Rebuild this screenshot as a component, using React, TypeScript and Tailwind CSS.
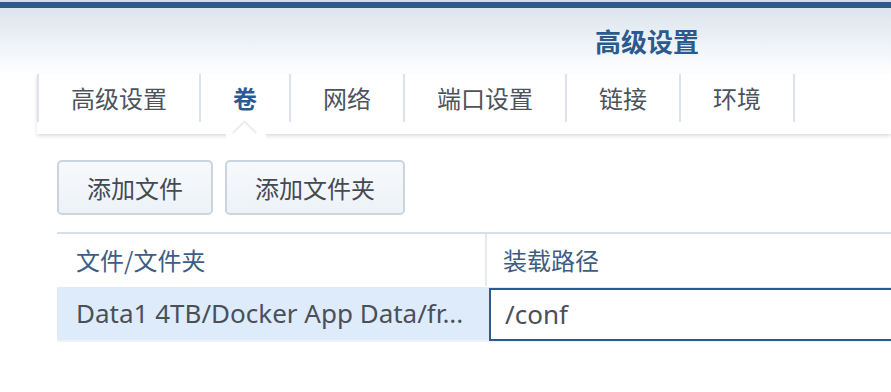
import React from "react";

const tabs = ["高级设置", "卷", "网络", "端口设置", "链接", "环境"];

export default function App() {
  return (
    <div className="w-[891px] h-[392px] bg-white overflow-hidden relative font-['Noto_Sans','Noto_Sans_CJK_SC',sans-serif]">
      <div className="h-[2px] bg-[#d6dce4]" />
      <div className="h-[6px] bg-[#2c5a8e]" />
      <div className="h-[66px] bg-gradient-to-b from-[#dce4ee] to-white flex items-center pl-[595px]">
        <span className="text-[26px] font-bold text-[#2c5a8e] leading-none font-['Noto_Sans_CJK_SC',sans-serif]">高级设置</span>
      </div>
      <div className="ml-[37px] h-[60px] bg-white relative z-10 shadow-[0_2px_4px_rgba(0,0,0,0.14)]">
        <div className="flex h-[48px]">
          {tabs.map((t, i) => (
            <div
              key={t}
              className={
                "flex items-center px-[32px] border-l-2 border-[#dbe3ec] text-[24px] leading-none font-['Noto_Sans_CJK_SC',sans-serif] " +
                (i === tabs.length - 1 ? "border-r-2 " : "") +
                (i === 1 ? "font-bold text-[#2c5a8e]" : "text-[#4d535c]")
              }
            >
              {t}
            </div>
          ))}
        </div>
        <div className="absolute left-[199px] bottom-[-9px] w-[17px] h-[17px] rotate-45 bg-white shadow-[-1px_-1px_2px_rgba(0,0,0,0.14)]" />
        <div className="absolute left-[189px] bottom-[-12px] w-[40px] h-[12px] bg-white" />
      </div>
      <div className="pt-[26px] pl-[57px]">
        <div className="flex gap-[12px]">
          <button className="h-[55px] px-[28px] rounded-[5px] border-2 border-[#cbd5e0] bg-gradient-to-b from-[#f7f9fc] to-[#edf2f7] text-[24px] leading-none text-[#444a52] font-['Noto_Sans_CJK_SC',sans-serif]">
            添加文件
          </button>
          <button className="h-[55px] px-[28px] rounded-[5px] border-2 border-[#cbd5e0] bg-gradient-to-b from-[#f7f9fc] to-[#edf2f7] text-[24px] leading-none text-[#444a52] font-['Noto_Sans_CJK_SC',sans-serif]">
            添加文件夹
          </button>
        </div>
        <div className="mt-[17px] w-[880px] border-t-2 border-[#d6e0ea]">
          <div className="flex h-[53px] border-b border-white">
            <div className="w-[430px] shrink-0 border-r-2 border-[#e3eaf2] flex items-center pl-[19px] text-[24px] text-[#3d5d85] font-['Noto_Sans_CJK_SC',sans-serif]">
              文件/文件夹
            </div>
            <div className="flex-1 flex items-center pl-[16px] text-[24px] text-[#3d5d85] font-['Noto_Sans_CJK_SC',sans-serif]">
              装载路径
            </div>
          </div>
          <div className="flex h-[55px] bg-[#deebfa] border-b-2 border-[#eef1f5]">
            <div className="w-[430px] shrink-0 flex items-center pl-[19px] text-[26px] text-[#4a505a] whitespace-nowrap overflow-hidden">
              Data1 4TB/Docker App Data/fr...
            </div>
            <div className="flex-1 pl-[2px] pt-[1px]">
              <div className="h-[53px] border-2 border-[#2c5a8e] bg-white flex items-center pl-[14px] text-[26px] text-[#4a505a]">
                /conf
              </div>
            </div>
          </div>
        </div>
      </div>
    </div>
  );
}
